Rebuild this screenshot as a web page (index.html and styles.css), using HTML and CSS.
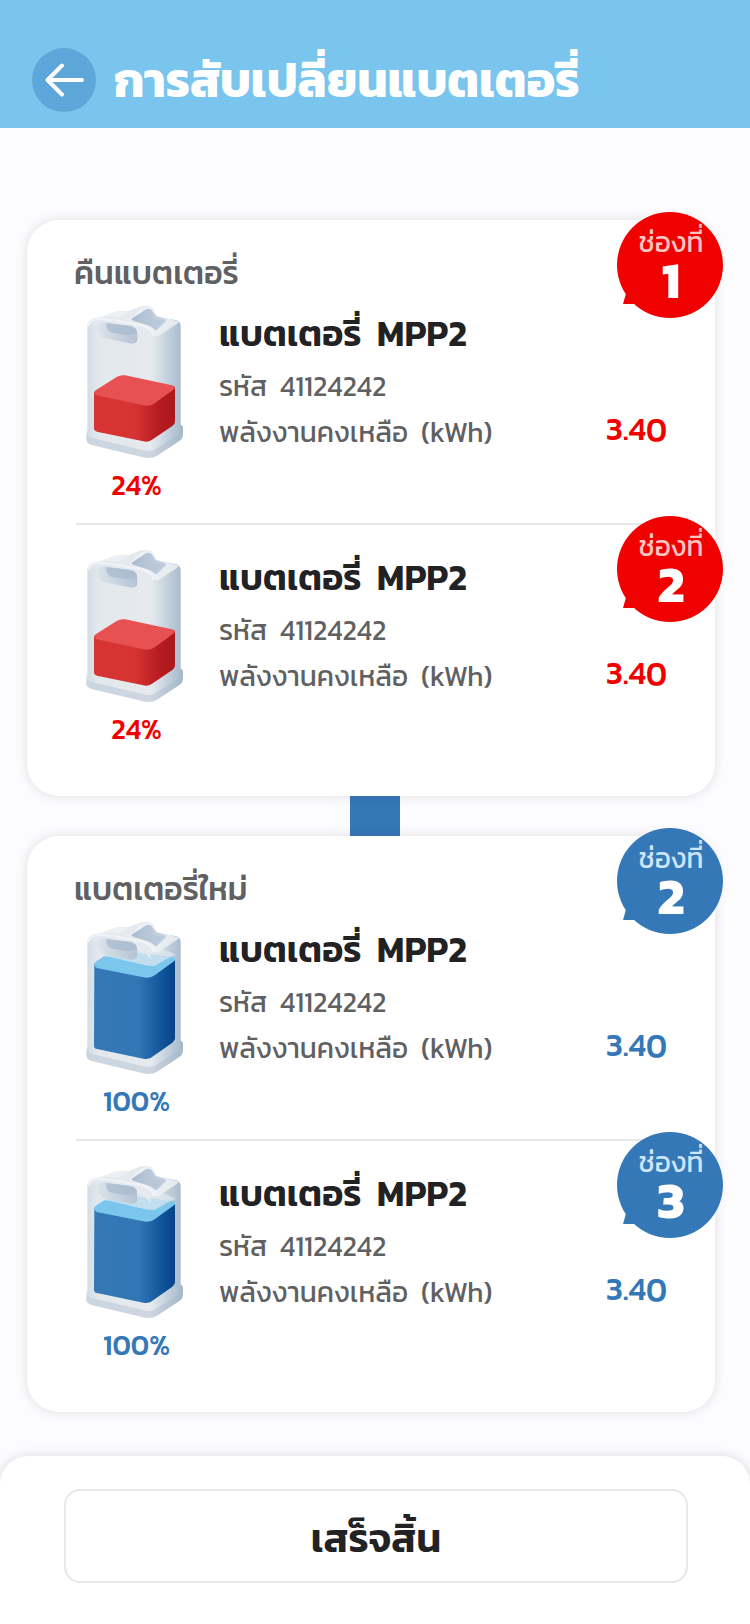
FILE: index.html
```html
<!DOCTYPE html>
<html lang="th">
<head>
<meta charset="utf-8">
<meta name="viewport" content="width=device-width, initial-scale=1">
<title>การสับเปลี่ยนแบตเตอรี่</title>
<link rel="stylesheet" href="styles.css">
</head>
<body>
<svg class="defs" aria-hidden="true">
  <defs>
    <linearGradient id="shell" x1="0" x2="1"><stop offset="0" stop-color="#d3dde6"/><stop offset=".12" stop-color="#e3e8ec"/><stop offset=".68" stop-color="#e6eaee"/><stop offset=".82" stop-color="#cbd6e1"/><stop offset="1" stop-color="#a9bccf"/></linearGradient>
    <linearGradient id="base" x1="0" x2="1"><stop offset="0" stop-color="#c9d5e0"/><stop offset=".65" stop-color="#ced7e0"/><stop offset="1" stop-color="#a4b7ca"/></linearGradient>
    <linearGradient id="hole" x1="0" x2="1"><stop offset="0" stop-color="#dbe3ea"/><stop offset="1" stop-color="#b4c3d3"/></linearGradient>
    <linearGradient id="well" x1="0" x2="1"><stop offset="0" stop-color="#a9bbd0"/><stop offset="1" stop-color="#c9d5e1"/></linearGradient>
    <linearGradient id="red" x1="0" x2="1"><stop offset="0" stop-color="#d93434"/><stop offset=".5" stop-color="#d73333"/><stop offset=".82" stop-color="#b51b20"/><stop offset="1" stop-color="#ab171b"/></linearGradient>
    <linearGradient id="blue" x1="0" x2="1"><stop offset="0" stop-color="#3478b8"/><stop offset=".55" stop-color="#3276b6"/><stop offset=".88" stop-color="#0d4f95"/><stop offset="1" stop-color="#064487"/></linearGradient>
    <symbol id="case" viewBox="75 192 300 468">
      <path fill="url(#base)" d="M82 572Q79 578 79 590V600Q80 610 92 614L255 653Q275 657 290 648L358 603Q369 596 369 583V563Q369 556 362 554L345 550L100 566Z"/>
      <path fill="url(#shell)" d="M82 262Q82 239 104 235L124 231L156 218Q180 210 205 213L244 199Q262 194 277 203L291 230L346 240Q362 244 362 258V570Q362 578 354 584L286 628Q274 636 258 632L94 593Q82 590 82 578Z"/>
      <path fill="#f0f3f5" opacity=".75" d="M120 232L156 218Q180 210 208 214L180 232Z"/>
    </symbol>
    <symbol id="handle" viewBox="75 192 300 468">
      <path fill="#e5eaf0" opacity=".8" d="M84 262Q82 241 102 237Q130 232 160 238L246 258Q267 263 272 280V308Q260 294 244 286L98 254Q88 252 84 262Z"/>
      <path fill="#edf1f5" opacity=".85" d="M206 238L248 201Q264 195 277 203Q285 210 286 225L317 235L350 243Q360 246 350 252L296 288Q282 291 270 272Z"/>
      <path fill="url(#well)" d="M217 235L256 209Q269 203 275 211Q281 221 288 229L311 235Q323 239 317 247L289 271L270 258L219 242Q212 239 217 235Z"/>
      <path fill="#b7c6d6" opacity=".7" d="M231 239L262 230L294 239L314 240L288 271L269 258Z"/>
      <path fill="url(#hole)" d="M130 247L211 258Q232 263 232 284V298Q231 311 215 311L136 295Q115 290 114 270V260Q115 248 130 247Z"/>
      <path fill="#aabbd0" opacity=".8" d="M139 249L211 258Q229 262 231 276Q219 287 199 285L157 279Q137 274 139 249Z"/>
      <path fill="none" stroke="#f2f5f7" stroke-width="6" opacity=".85" d="M85 257Q90 237 118 237Q143 237 173 242L250 257Q278 264 280 288"/>
    </symbol>
    <symbol id="low" viewBox="75 192 300 468">
      <path fill="url(#red)" d="M102 456L180 430L345 440V545Q345 552 337 558L275 600Q265 607 250 604L111 575Q102 573 102 565Z"/>
      <path fill="#e85152" d="M107 451L170 411Q181 404 195 406L336 436Q351 440 342 448L284 490Q273 499 257 497L110 466Q97 460 107 451Z"/>
    </symbol>
    <symbol id="full" viewBox="75 192 300 468">
      <path fill="url(#blue)" d="M103 323L180 300L345 310V547Q345 554 337 560L275 604Q265 611 250 608L111 579Q102 577 102 569Z"/>
      <path fill="#7bc6ed" d="M107 317L152 288Q163 281 177 283L337 303Q351 308 342 316L284 358Q273 367 257 365L110 336Q97 327 107 317Z"/>
      <path fill="#dfe8ef" opacity=".7" d="M112 298L170 262L270 262L348 296L330 304L283 330L262 329L150 303Z"/>
    </symbol>
  </defs>
</svg>

<header class="header">
  <button class="back" type="button" aria-label="ย้อนกลับ">
    <svg viewBox="0 0 64 64" aria-hidden="true"><path d="M30 17.500L15.500 32L30 46.500M16 32H50"/></svg>
  </button>
  <h1 class="title">การสับเปลี่ยนแบตเตอรี่</h1>
</header>

<main class="content">
  <section class="card card-return">
    <h2 class="card-title">คืนแบตเตอรี่</h2>
    <article class="item">
      <div class="slot"><span class="slot-label">ช่องที่</span><strong class="slot-number">1</strong></div>
      <div class="battery">
        <svg class="battery-art" aria-hidden="true"><use href="#case"/><use href="#handle"/><use href="#low"/></svg>
        <span class="percent">24%</span>
      </div>
      <div class="info">
        <h3 class="name">แบตเตอรี่&nbsp; MPP2</h3>
        <p class="line">รหัส&nbsp; 41124242</p>
        <p class="line energy"><span>พลังงานคงเหลือ&nbsp; (kWh)</span><b class="value">3.40</b></p>
      </div>
    </article>
    <article class="item">
      <div class="slot"><span class="slot-label">ช่องที่</span><strong class="slot-number">2</strong></div>
      <div class="battery">
        <svg class="battery-art" aria-hidden="true"><use href="#case"/><use href="#handle"/><use href="#low"/></svg>
        <span class="percent">24%</span>
      </div>
      <div class="info">
        <h3 class="name">แบตเตอรี่&nbsp; MPP2</h3>
        <p class="line">รหัส&nbsp; 41124242</p>
        <p class="line energy"><span>พลังงานคงเหลือ&nbsp; (kWh)</span><b class="value">3.40</b></p>
      </div>
    </article>
  </section>
  <div class="connector"></div>
  <section class="card card-new">
    <h2 class="card-title">แบตเตอรี่ใหม่</h2>
    <article class="item">
      <div class="slot"><span class="slot-label">ช่องที่</span><strong class="slot-number">2</strong></div>
      <div class="battery">
        <svg class="battery-art" aria-hidden="true"><use href="#case"/><use href="#full"/><use href="#handle"/></svg>
        <span class="percent">100%</span>
      </div>
      <div class="info">
        <h3 class="name">แบตเตอรี่&nbsp; MPP2</h3>
        <p class="line">รหัส&nbsp; 41124242</p>
        <p class="line energy"><span>พลังงานคงเหลือ&nbsp; (kWh)</span><b class="value">3.40</b></p>
      </div>
    </article>
    <article class="item">
      <div class="slot"><span class="slot-label">ช่องที่</span><strong class="slot-number">3</strong></div>
      <div class="battery">
        <svg class="battery-art" aria-hidden="true"><use href="#case"/><use href="#full"/><use href="#handle"/></svg>
        <span class="percent">100%</span>
      </div>
      <div class="info">
        <h3 class="name">แบตเตอรี่&nbsp; MPP2</h3>
        <p class="line">รหัส&nbsp; 41124242</p>
        <p class="line energy"><span>พลังงานคงเหลือ&nbsp; (kWh)</span><b class="value">3.40</b></p>
      </div>
    </article>
  </section>
</main>

<footer class="footer">
  <button class="done" type="button">เสร็จสิ้น</button>
</footer>
</body>
</html>
```

FILE: styles.css
```css
* {
  box-sizing: border-box;
}

body {
  display: flex;
  flex-direction: column;
  min-height: 100vh;
  margin: 0;
  background: #fcfcff;
  color: #222224;
  font-family: Kanit, Prompt, "Noto Sans Thai", Inter, sans-serif;
}

h1,
h2,
h3,
p {
  margin: 0;
}

.defs {
  position: absolute;
  width: 0;
  height: 0;
}

.header {
  display: flex;
  align-items: center;
  gap: 18px;
  padding: 48px 32px 16px;
  background: #79c5ed;
}

.back {
  flex: none;
  width: 64px;
  height: 64px;
  padding: 0;
  border: 0;
  border-radius: 50%;
  background: #5ca6da;
}

.back svg {
  display: block;
  fill: none;
  stroke: #fff;
  stroke-width: 4;
  stroke-linecap: round;
  stroke-linejoin: round;
}

.title {
  color: #fff;
  font-size: 48px;
  line-height: 62px;
  font-weight: 700;
  white-space: nowrap;
}

.content {
  flex: 1;
  display: flex;
  flex-direction: column;
  padding: 92px 35px 44px 27px;
}

.card {
  position: relative;
  border-radius: 32px;
  background: #fff;
  box-shadow: 0 0 12px rgba(0, 0, 0, 0.12);
}

.card-return {
  --accent: #f10000;
  --slot-text: #ffc4c4;
}

.card-new {
  --accent: #3578b8;
  --slot-text: #cfe5fa;
}

.card-title {
  padding: 31px 47px 1px;
  color: #606062;
  font-size: 32px;
  line-height: 44px;
  font-weight: 500;
}

.item {
  display: flex;
  gap: 25px;
  margin: 0 48px 0 49px;
  padding: 8px 0 22px;
}

.item + .item {
  position: relative;
  padding-top: 23px;
  padding-bottom: 51px;
  border-top: 2px solid #e8e8e8;
}

.slot {
  position: absolute;
  top: -8px;
  right: -8px;
  display: flex;
  flex-direction: column;
  align-items: center;
  width: 106px;
  height: 106px;
  padding: 14px 0 0 2px;
  border-radius: 50%;
  background: var(--accent);
}

.item + .item .slot {
  top: -9px;
  right: -56px;
}

.slot::before {
  content: "";
  position: absolute;
  top: 78px;
  left: 6px;
  width: 20px;
  height: 14px;
  background: var(--accent);
  clip-path: polygon(0 100%, 20% 0, 100% 100%);
}

.slot-label {
  position: relative;
  color: var(--slot-text);
  font-size: 28px;
  line-height: 32px;
  font-weight: 400;
}

.slot-number {
  position: relative;
  color: #fff;
  font-size: 52px;
  line-height: 44px;
  font-weight: 700;
}

.battery {
  flex: none;
  display: flex;
  flex-direction: column;
  align-items: center;
  width: 118px;
}

.battery-art {
  width: 100px;
  height: 156px;
}

.percent {
  margin-top: 9px;
  padding-left: 3px;
  color: var(--accent);
  font-size: 28px;
  line-height: 32px;
  font-weight: 500;
}

.info {
  flex: 1;
  min-width: 0;
}

.name {
  margin-top: 4px;
  margin-bottom: 5px;
  font-size: 36px;
  line-height: 50px;
  font-weight: 600;
}

.line {
  color: #606062;
  font-size: 28px;
  line-height: 46px;
  font-weight: 400;
  white-space: nowrap;
}

.energy {
  display: flex;
  justify-content: space-between;
}

.value {
  color: var(--accent);
  font-size: 32px;
  line-height: 40px;
  font-weight: 500;
}

.connector {
  align-self: center;
  width: 50px;
  height: 40px;
  margin-left: 8px;
  background: #3578b8;
}

.footer {
  padding: 33px 62px 41px 64px;
  border-radius: 28px 28px 0 0;
  background: #fff;
  box-shadow: 0 0 12px rgba(0, 0, 0, 0.14);
}

.done {
  display: block;
  width: 100%;
  height: 94px;
  padding: 4px 0 0;
  border: 2px solid #e8e8e8;
  border-radius: 16px;
  background: #fff;
  color: #222224;
  font: inherit;
  font-size: 40px;
  font-weight: 600;
}
```
